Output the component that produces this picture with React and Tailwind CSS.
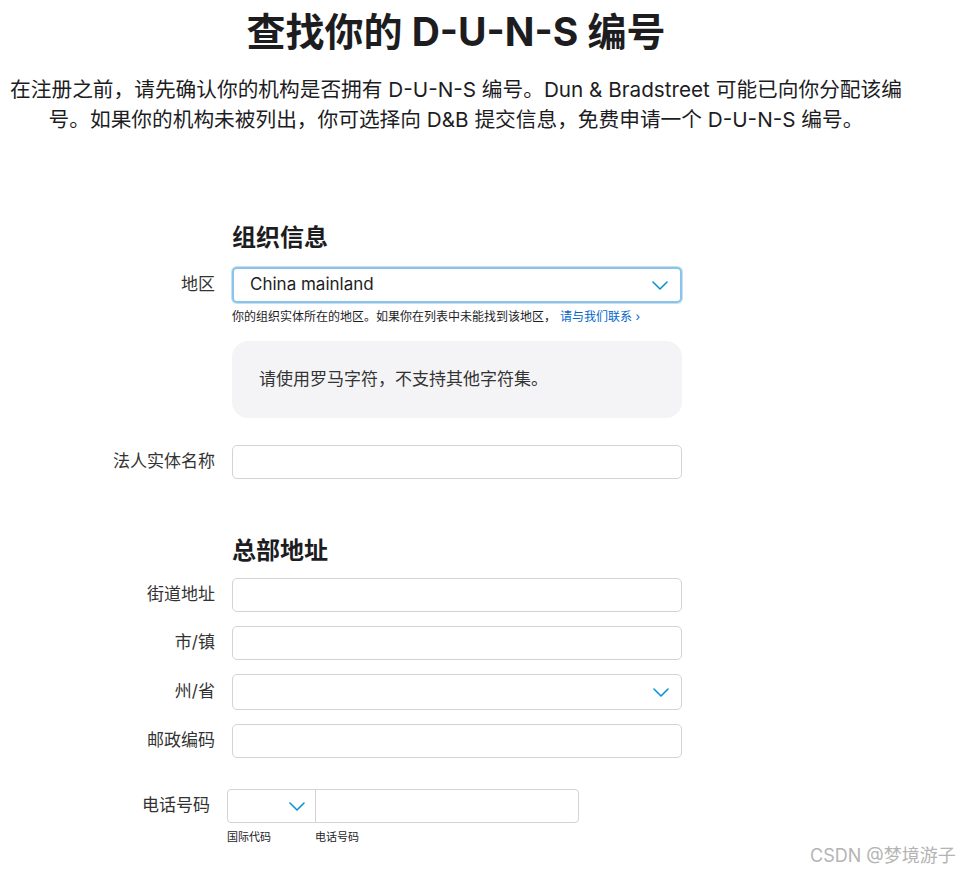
import React from 'react';

const font = { fontFamily: 'Inter, "Noto Sans CJK SC", sans-serif' };

function Chevron({ className }) {
  return (
    <svg className={className} width="16" height="9" viewBox="0 0 16 9" fill="none">
      <polyline points="1,1 8,8 15,1" stroke="#0a93d6" strokeWidth="1.6" strokeLinecap="round" strokeLinejoin="round" />
    </svg>
  );
}

function Row({ label, children, className = '' }) {
  return (
    <div className={`flex items-center ${className}`}>
      <label className="w-[232px] shrink-0 pr-[17px] text-right text-[17px] text-[#333]">{label}</label>
      {children}
    </div>
  );
}

function TextField({ className = '' }) {
  return <div className={`w-[450px] h-[34px] rounded-[5px] border border-[#d2d2d7] bg-white ${className}`} />;
}

function SelectField({ value, focused }) {
  return (
    <div
      className={`flex w-[450px] h-[36px] items-center justify-between rounded-[5px] bg-white pl-[16px] pr-[12px] ${
        focused ? 'border-2 border-[#8cc4e8] shadow-[0_0_0_1px_rgba(140,196,232,0.5)]' : 'border border-[#d2d2d7]'
      }`}
    >
      <span className="text-[17px] text-[#1d1d1f]">{value}</span>
      <Chevron />
    </div>
  );
}

export default function App() {
  return (
    <div className="relative h-[872px] w-[960px] bg-white text-[#1d1d1f]" style={font}>
      {/* 标题 */}
      <div className="w-[912px] text-center">
        <h1 className="pt-[8px] text-[39px] font-bold leading-[48px]">查找你的 D-U-N-S 编号</h1>
        <p className="mt-[19px] text-[20.7px] leading-[30px] text-[#1d1d1f]">
          在注册之前，请先确认你的机构是否拥有 D-U-N-S 编号。Dun &amp; Bradstreet 可能已向你分配该编号。如果你的机构未被列出，你可选择向 D&amp;B 提交信息，免费申请一个 D-U-N-S 编号。
        </p>
      </div>

      {/* 组织信息 */}
      <div className="mt-[88px]">
        <h2 className="pl-[232px] text-[24px] font-bold leading-[30px]">组织信息</h2>

        <Row label="地区" className="mt-[14px]">
          <SelectField value="China mainland" focused />
        </Row>
        <p className="mt-[6px] pl-[232px] text-[12px] leading-[16px] text-[#1d1d1f]">
          你的组织实体所在的地区。如果你在列表中未能找到该地区，
          <span className="ml-[4px] text-[#0066cc]">请与我们联系 ›</span>
        </p>

        <div className="ml-[232px] mt-[16px] flex h-[77px] w-[450px] items-center rounded-[16px] bg-[#f4f4f6] px-[27px] text-[17px] text-[#333]">
          请使用罗马字符，不支持其他字符集。
        </div>

        <Row label="法人实体名称" className="mt-[27px]">
          <TextField />
        </Row>
      </div>

      {/* 总部地址 */}
      <div className="mt-[57px]">
        <h2 className="pl-[232px] text-[24px] font-bold leading-[30px]">总部地址</h2>
        <Row label="街道地址" className="mt-[12px]">
          <TextField />
        </Row>
        <Row label="市/镇" className="mt-[14px]">
          <TextField />
        </Row>
        <Row label="州/省" className="mt-[14px]">
          <SelectField value="" />
        </Row>
        <Row label="邮政编码" className="mt-[14px]">
          <TextField />
        </Row>

        <div className="mt-[31px] flex items-center">
          <label className="w-[227px] shrink-0 pr-[17px] text-right text-[17px] text-[#333]">电话号码</label>
          <div className="flex h-[34px] w-[352px] rounded-[4px] border border-[#d2d2d7]">
            <div className="flex w-[88px] items-center justify-end border-r border-[#d2d2d7] pr-[10px]">
              <Chevron />
            </div>
            <div className="flex-1" />
          </div>
        </div>
        <div className="mt-[7px] flex pl-[227px] text-[11px] leading-[14px] text-[#1d1d1f]">
          <span className="w-[88px]">国际代码</span>
          <span>电话号码</span>
        </div>
      </div>

      {/* 水印 */}
      <div className="absolute left-[810px] top-[842px] text-[18px] text-[#b4b4b4]">CSDN @梦境游子</div>
    </div>
  );
}
